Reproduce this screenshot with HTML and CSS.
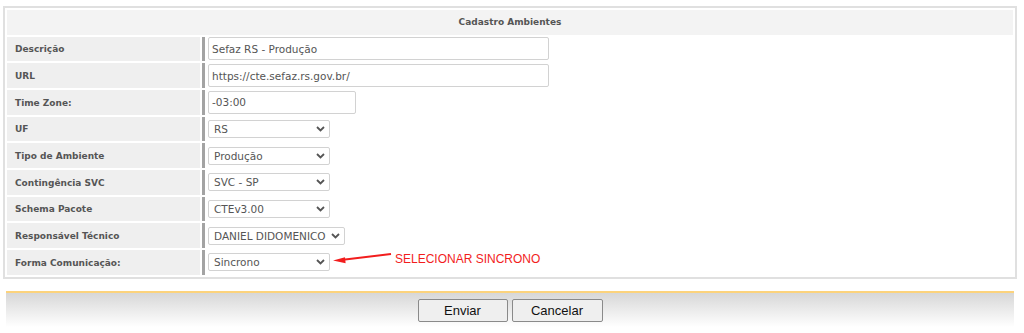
FILE: index.html
```html
<!DOCTYPE html>
<html>
<head>
    <meta charset="utf-8">
    <title>Cadastro Ambientes</title>
    <link rel="stylesheet" href="styles.css">
</head>
<body>
    <div class="panel">
        <table class="form">
            <tr><th colspan="2" class="title">Cadastro Ambientes</th></tr>
            <tr>
                <td class="label">Descrição</td>
                <td class="field"><input class="text wide" value="Sefaz RS - Produção"></td>
            </tr>
            <tr>
                <td class="label">URL</td>
                <td class="field"><input class="text wide" value="https://cte.sefaz.rs.gov.br/"></td>
            </tr>
            <tr>
                <td class="label">Time Zone:</td>
                <td class="field"><input class="text short" value="-03:00"></td>
            </tr>
            <tr>
                <td class="label">UF</td>
                <td class="field">
                    <span class="select"><select><option>RS</option></select><svg class="chev" viewBox="0 0 9 6"><path d="M1 1 L4.5 4.5 L8 1"/></svg></span>
                </td>
            </tr>
            <tr>
                <td class="label">Tipo de Ambiente</td>
                <td class="field">
                    <span class="select"><select><option>Produção</option></select><svg class="chev" viewBox="0 0 9 6"><path d="M1 1 L4.5 4.5 L8 1"/></svg></span>
                </td>
            </tr>
            <tr>
                <td class="label">Contingência SVC</td>
                <td class="field">
                    <span class="select"><select><option>SVC - SP</option></select><svg class="chev" viewBox="0 0 9 6"><path d="M1 1 L4.5 4.5 L8 1"/></svg></span>
                </td>
            </tr>
            <tr>
                <td class="label">Schema Pacote</td>
                <td class="field">
                    <span class="select"><select><option>CTEv3.00</option></select><svg class="chev" viewBox="0 0 9 6"><path d="M1 1 L4.5 4.5 L8 1"/></svg></span>
                </td>
            </tr>
            <tr>
                <td class="label">Responsável Técnico</td>
                <td class="field">
                    <span class="select select-wide"><select><option>DANIEL DIDOMENICO</option></select><svg class="chev" viewBox="0 0 9 6"><path d="M1 1 L4.5 4.5 L8 1"/></svg></span>
                </td>
            </tr>
            <tr>
                <td class="label">Forma Comunicação:</td>
                <td class="field">
                    <div class="with-note">
                        <span class="select"><select><option>Sincrono</option></select><svg class="chev" viewBox="0 0 9 6"><path d="M1 1 L4.5 4.5 L8 1"/></svg></span>
                        <svg class="arrow" width="62" height="20" viewBox="0 0 62 20">
                            <line x1="12" y1="7.8" x2="60" y2="2" stroke="#f21d1d" stroke-width="2"/>
                            <polygon points="2,8.6 14,5.2 14.6,11.2" fill="#f21d1d"/>
                        </svg>
                        <span class="note">SELECIONAR SINCRONO</span>
                    </div>
                </td>
            </tr>
        </table>
    </div>

    <div class="actions">
        <button class="btn">Enviar</button>
        <button class="btn btn-cancel">Cancelar</button>
    </div>
</body>
</html>
```

FILE: styles.css
```css
body {
    margin: 0;
    background: white;
    font-family: "DejaVu Sans", Verdana, sans-serif;
}
.panel {
    margin: 6px 7px 0 3px;
    border: 2px solid #e0e0e0;
}
.form {
    width: 100%;
    border-collapse: separate;
    border-spacing: 2px;
}
.form th,
.form td {
    height: 24.67px;
    padding: 0;
    box-sizing: border-box;
}
.title {
    background: #f3f3f3;
    color: #555;
    font-size: 9px;
    font-weight: bold;
    text-align: center;
}
.label {
    width: 193px;
    padding: 1px 8px 0 !important;
    background: #efefef;
    color: #555;
    font-size: 9px;
    font-weight: bold;
}
.field {
    border-left: 3px solid #a3a3a3;
    padding-left: 3px !important;
    vertical-align: middle;
}
.text {
    display: block;
    box-sizing: border-box;
    height: 23px;
    padding: 0 0 0 3px;
    border: 1px solid #d2d2d2;
    border-radius: 2px;
    font-family: "DejaVu Sans", Verdana, sans-serif;
    font-size: 10.5px;
    color: #555;
    outline: none;
}
.wide { width: 341px; }
.short { width: 148px; }
.select {
    position: relative;
    display: block;
    width: 122px;
    height: 18px;
    flex-shrink: 0;
}
.select-wide { width: 137px; }
.select select {
    -webkit-appearance: none;
    appearance: none;
    display: block;
    box-sizing: border-box;
    width: 100%;
    height: 18px;
    margin: 0;
    padding: 0 0 0 5px;
    border: 1px solid #d2d2d2;
    border-radius: 2px;
    background: white;
    font-family: "DejaVu Sans", Verdana, sans-serif;
    font-size: 10.5px;
    color: #555;
    outline: none;
}
.chev {
    position: absolute;
    right: 5px;
    top: 6px;
    width: 9px;
    height: 6px;
    fill: none;
    stroke: #555;
    stroke-width: 1.8;
}
.with-note {
    display: flex;
    align-items: center;
}
.arrow {
    margin-left: 1px;
    flex-shrink: 0;
}
.note {
    margin: 0 0 6px 2px;
    font-family: "Liberation Sans", Arial, sans-serif;
    font-size: 12px;
    color: #f21d1d;
}
.actions {
    margin: 12px 10px 0 6px;
    border-top: 2px solid #fcd37c;
    background: linear-gradient(#d7d7d7, #ffffff 34px);
    height: 37px;
    padding-top: 6px;
    box-sizing: border-box;
    display: flex;
    justify-content: center;
    gap: 4px;
}
.btn {
    width: 90px;
    height: 23px;
    padding: 0;
    border: 1px solid #8a8a8a;
    border-radius: 2px;
    background: #efefef;
    font-family: "Liberation Sans", Arial, sans-serif;
    font-size: 13px;
    color: #111;
}
.btn-cancel { width: 91px; }
```
